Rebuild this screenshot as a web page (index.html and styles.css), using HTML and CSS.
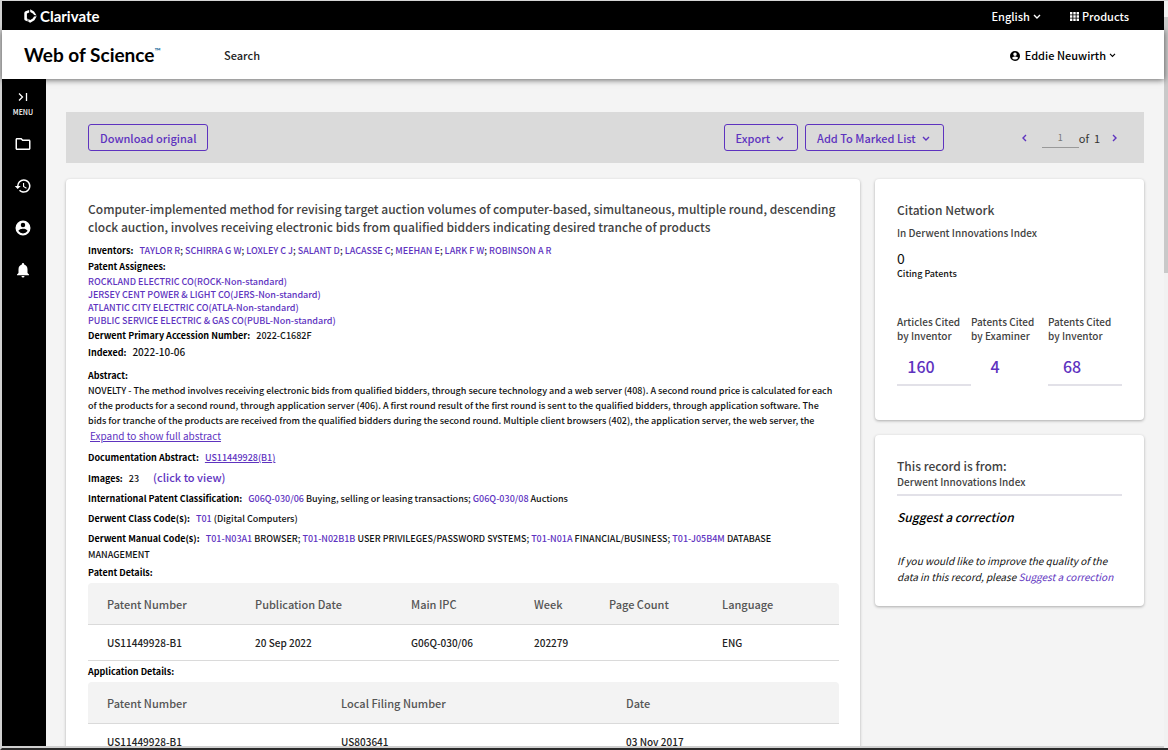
FILE: index.html
```html
<!DOCTYPE html>
<html lang="en">
<head>
    <title>Web of Science</title>
    <meta charset="UTF-8">
    <meta name="viewport" content="width=device-width, initial-scale=1.0">
    <link rel="stylesheet" href="styles.css">
</head>
<body>
    <div class="window">
        <div class="page">
            <header class="topbar">
                <a href="#" class="clarivate">
                    <svg width="13" height="14" viewBox="0 0 13 14" fill="#fff">
                        <path d="M5.2.9 1.5 2.200Q.3 2.700.3 4v6q0 1.200 1 1.600l2.400.8V9.800L2.900 9.400V4.600l2.300-1.200z"/>
                        <path d="M6.200.3 10 2.500l2.600 3.900-2.500-.5-1.200-1.500-2.700-1.500z"/>
                        <path d="m12.700 7.300-2.300 4L6.200 13.700l-1.900-1V10l1.900 1 2.600-1.500 1.200-2z"/>
                    </svg>
                    <span>Clarivate</span>
                </a>
                <div class="topbar-links">
                    <button class="topbar-btn">English
                        <svg class="chevron" width="8" height="6" viewBox="0 0 8 6"><path d="m1 1 3 3 3-3"/></svg>
                    </button>
                    <button class="topbar-btn">
                        <svg width="9" height="9" viewBox="0 0 9 9" fill="#fff"><path d="M0 0h2.4v2.4H0zM3.3 0h2.4v2.4H3.3zM6.6 0H9v2.4H6.600zM0 3.300h2.400v2.400H0zM3.300 3.300h2.400v2.400H3.300zM6.600 3.300H9v2.400H6.600zM0 6.600h2.400V9H0zM3.300 6.600h2.400V9H3.300zM6.600 6.600H9V9H6.600z"/></svg>
                        Products
                    </button>
                </div>
            </header>

            <div class="header">
                <a href="#" class="brand">Web of Science<sup>™</sup></a>
                <a href="#" class="nav-link">Search</a>
                <button class="user-btn">
                    <svg width="10" height="10" viewBox="2 2 20 20"><path d="M12 2a10 10 0 1 0 0 20 10 10 0 0 0 0-20zm0 3a3.500 3.500 0 1 1 0 7 3.500 3.500 0 0 1 0-7zm0 14.200a7.200 7.200 0 0 1-6-3.220c.03-1.990 4-3.080 6-3.080s5.970 1.090 6 3.080a7.200 7.200 0 0 1-6 3.220z"/></svg>
                    <span>Eddie Neuwirth</span>
                    <svg class="chevron" width="7" height="5" viewBox="0 0 8 6"><path d="m1 1 3 3 3-3"/></svg>
                </button>
            </div>

            <div class="body">
                <nav class="sidebar">
                    <button class="menu-btn">
                        <svg width="10" height="10" viewBox="0 0 10 10" fill="none" stroke="#fff" stroke-width="1.300"><path d="m1 1.500 3.500 3.500L1 8.500M8.500 1v8"/></svg>
                        <span>MENU</span>
                    </button>
                    <a href="#" aria-label="Folder">
                        <svg width="18" height="18" viewBox="0 0 24 24"><path d="M9.170 6l2 2H20v10H4V6h5.170M10 4H4c-1.100 0-2 .9-2 2v12c0 1.100.9 2 2 2h16c1.100 0 2-.9 2-2V8c0-1.100-.9-2-2-2h-8l-2-2z"/></svg>
                    </a>
                    <a href="#" aria-label="History">
                        <svg width="18" height="18" viewBox="0 0 24 24"><path d="M13 3a9 9 0 0 0-9 9H1l3.890 3.890.07.14L9 12H6a7 7 0 1 1 7 7 6.950 6.950 0 0 1-4.940-2.060l-1.420 1.420A9 9 0 1 0 13 3zm-1 5v5l4.280 2.540.72-1.210-3.500-2.080V8H12z"/></svg>
                    </a>
                    <a href="#" aria-label="Profile">
                        <svg width="18" height="18" viewBox="0 0 24 24"><path d="M12 2a10 10 0 1 0 0 20 10 10 0 0 0 0-20zm0 3a3 3 0 1 1 0 6 3 3 0 0 1 0-6zm0 14.200a7.200 7.200 0 0 1-6-3.220c.03-1.990 4-3.080 6-3.080s5.970 1.090 6 3.080a7.200 7.200 0 0 1-6 3.220z"/></svg>
                    </a>
                    <a href="#" aria-label="Alerts">
                        <svg width="18" height="18" viewBox="0 0 24 24"><path d="M12 22a2 2 0 0 0 2-2h-4a2 2 0 0 0 2 2zm6-6v-5c0-3.070-1.640-5.640-4.500-6.320V4a1.500 1.500 0 0 0-3 0v.68C7.630 5.360 6 7.920 6 11v5l-2 2v1h16v-1l-2-2z"/></svg>
                    </a>
                </nav>

                <main class="content">
                    <div class="toolbar">
                        <button class="btn">Download original</button>
                        <div class="toolbar-right">
                            <button class="btn">Export
                                <svg class="chevron" width="8" height="6" viewBox="0 0 8 6"><path d="m1 1 3 3 3-3"/></svg>
                            </button>
                            <button class="btn">Add To Marked List
                                <svg class="chevron" width="8" height="6" viewBox="0 0 8 6"><path d="m1 1 3 3 3-3"/></svg>
                            </button>
                            <div class="pager">
                                <button class="pager-btn" aria-label="Previous record">
                                    <svg class="chevron" width="6" height="8" viewBox="0 0 6 8"><path d="M4 1 1 4l3 3"/></svg>
                                </button>
                                <input class="pager-input" type="text" value="1" aria-label="Record number">
                                <span>of&nbsp; 1</span>
                                <button class="pager-btn" aria-label="Next record">
                                    <svg class="chevron" width="6" height="8" viewBox="0 0 6 8"><path d="m1 1 3 3-3 3"/></svg>
                                </button>
                            </div>
                        </div>
                    </div>

                    <div class="columns">
                        <article class="card record">
                            <h1>Computer-implemented method for revising target auction volumes of computer-based, simultaneous, multiple round, descending clock auction, involves receiving electronic bids from qualified bidders indicating desired tranche of products</h1>

                            <div class="row"><b>Inventors:</b> <a href="#">TAYLOR R</a>; <a href="#">SCHIRRA G W</a>; <a href="#">LOXLEY C J</a>; <a href="#">SALANT D</a>; <a href="#">LACASSE C</a>; <a href="#">MEEHAN E</a>; <a href="#">LARK F W</a>; <a href="#">ROBINSON A R</a></div>
                            <div class="row"><b>Patent Assignees:</b></div>
                            <ul class="assignees">
                                <li><a href="#">ROCKLAND ELECTRIC CO(ROCK-Non-standard)</a></li>
                                <li><a href="#">JERSEY CENT POWER &amp; LIGHT CO(JERS-Non-standard)</a></li>
                                <li><a href="#">ATLANTIC CITY ELECTRIC CO(ATLA-Non-standard)</a></li>
                                <li><a href="#">PUBLIC SERVICE ELECTRIC &amp; GAS CO(PUBL-Non-standard)</a></li>
                            </ul>
                            <div class="row"><b>Derwent Primary Accession Number:</b> 2022-C1682F</div>
                            <div class="row"><b>Indexed:</b> <span class="large">2022-10-06</span></div>

                            <section class="abstract">
                                <div class="row"><b>Abstract:</b></div>
                                <p>NOVELTY - The method involves receiving electronic bids from qualified bidders, through secure technology and a web server (408). A second round price is calculated for each of the products for a second round, through application server (406). A first round result of the first round is sent to the qualified bidders, through application software. The bids for tranche of the products are received from the qualified bidders during the second round. Multiple client browsers (402), the application server, the web server, the</p>
                                <button class="expand">Expand to show full abstract</button>
                            </section>

                            <div class="row spaced"><b>Documentation Abstract:</b> <a href="#" class="underlined">US11449928(B1)</a></div>
                            <div class="row spaced"><b>Images:</b> 23 <a href="#" class="view-link">(click to view)</a></div>
                            <div class="row spaced"><b>International Patent Classification:</b> <a href="#">G06Q-030/06</a> Buying, selling or leasing transactions; <a href="#">G06Q-030/08</a> Auctions</div>
                            <div class="row spaced"><b>Derwent Class Code(s):</b> <a href="#">T01</a> (Digital Computers)</div>
                            <div class="row codes"><b>Derwent Manual Code(s):</b> <a href="#">T01-N03A1</a> BROWSER; <a href="#">T01-N02B1B</a> USER PRIVILEGES/PASSWORD SYSTEMS; <a href="#">T01-N01A</a> FINANCIAL/BUSINESS; <a href="#">T01-J05B4M</a> DATABASE MANAGEMENT</div>

                            <table class="details patent">
                                <caption>Patent Details:</caption>
                                <thead>
                                    <tr><th>Patent Number</th><th>Publication Date</th><th>Main IPC</th><th>Week</th><th>Page Count</th><th>Language</th></tr>
                                </thead>
                                <tbody>
                                    <tr><td>US11449928-B1</td><td>20 Sep 2022</td><td>G06Q-030/06</td><td>202279</td><td></td><td>ENG</td></tr>
                                </tbody>
                            </table>

                            <table class="details application">
                                <caption>Application Details:</caption>
                                <thead>
                                    <tr><th>Patent Number</th><th>Local Filing Number</th><th>Date</th></tr>
                                </thead>
                                <tbody>
                                    <tr><td>US11449928-B1</td><td>US803641</td><td>03 Nov 2017</td></tr>
                                </tbody>
                            </table>
                        </article>

                        <aside class="side">
                            <section class="card citation">
                                <h2>Citation Network</h2>
                                <h3>In Derwent Innovations Index</h3>
                                <div class="citing-count">0</div>
                                <div class="citing-label">Citing Patents</div>
                                <div class="cited">
                                    <div class="cited-item lined">
                                        <h3>Articles Cited by Inventor</h3>
                                        <a href="#">160</a>
                                    </div>
                                    <div class="cited-item">
                                        <h3>Patents Cited by Examiner</h3>
                                        <a href="#">4</a>
                                    </div>
                                    <div class="cited-item lined">
                                        <h3>Patents Cited by Inventor</h3>
                                        <a href="#">68</a>
                                    </div>
                                </div>
                            </section>

                            <section class="card source">
                                <h2>This record is from:</h2>
                                <h3>Derwent Innovations Index</h3>
                                <h4>Suggest a correction</h4>
                                <p>If you would like to improve the quality of the data in this record, please <a href="#">Suggest a correction</a></p>
                            </section>
                        </aside>
                    </div>
                </main>
            </div>
        </div>
        <div class="scrollbar"><div class="scrollbar-thumb"></div></div>
    </div>
</body>
</html>
```
FILE: styles.css
```css
:root {
    --purple: #5e33bf;
    --heading: #424242;
    --text: #111111;
    --page-bg: #f4f4f4;
    --toolbar-bg: #dadada;
    --line: #dadada;
}

* {
    margin: 0;
    padding: 0;
    box-sizing: border-box;
}

body {
    font-family: "Noto Sans CJK SC", "Noto Sans", sans-serif;
    font-size: 10px;
    line-height: 16px;
    color: var(--text);
    background: var(--page-bg);
    overflow: hidden;
}

a {
    color: var(--purple);
    text-decoration: none;
}

button {
    font: inherit;
    border: none;
    background: none;
    cursor: pointer;
}

svg {
    flex: none;
}

.chevron {
    fill: none;
    stroke: currentColor;
    stroke-width: 1.4;
}

.window {
    display: flex;
    height: 100vh;
    border-top: 1px solid #d5d5d5;
    border-left: 2px solid #d0d0d0;
    border-bottom: 2px solid #2a2a2a;
}

.page {
    flex: 1;
    min-width: 0;
    display: flex;
    flex-direction: column;
    border-bottom: 2px solid #cfcfcf;
}

.scrollbar {
    width: 4px;
    padding-top: 16px;
    background: #f1f1f1;
}

.scrollbar-thumb {
    height: 35%;
    background: #c9c9c9;
}

/* Top bar */
.topbar {
    display: flex;
    align-items: center;
    justify-content: space-between;
    height: 29px;
    padding: 0 35px 0 22px;
    background: #000;
    color: #fff;
}

.clarivate {
    display: flex;
    align-items: center;
    gap: 3px;
    font-family: Lato, sans-serif;
    font-size: 15px;
    font-weight: bold;
    color: #fff;
}

.topbar-links {
    display: flex;
    gap: 29px;
}

.topbar-btn {
    display: flex;
    align-items: center;
    gap: 3px;
    font-size: 11px;
    font-weight: 500;
    color: #fff;
}

.topbar-btn svg,
.user-btn svg,
.btn svg {
    margin-top: 2px;
}

/* Header */
.header {
    position: relative;
    display: flex;
    align-items: center;
    height: 49px;
    padding: 0 48px 0 22px;
    background: #fff;
    box-shadow: 0 1px 6px rgba(0, 0, 0, 0.6);
}

.brand {
    width: 200px;
    font-family: Lato, sans-serif;
    font-size: 19px;
    font-weight: bold;
    color: #000;
}

.brand sup {
    font-size: 8px;
    vertical-align: 8px;
    line-height: 0;
    color: #1c6c9c;
}

.nav-link {
    font-size: 11px;
    font-weight: 500;
    color: #222;
}

.user-btn {
    display: flex;
    align-items: center;
    gap: 3px;
    margin-left: auto;
    font-size: 11px;
    font-weight: 500;
}

.user-btn span {
    margin-left: 2px;
}

.body {
    flex: 1;
    min-height: 0;
    display: flex;
}

/* Sidebar */
.sidebar {
    display: flex;
    flex-direction: column;
    align-items: center;
    gap: 24px;
    width: 44px;
    padding-top: 13px;
    background: #000;
}

.sidebar a {
    height: 18px;
    padding-right: 2px;
}

.sidebar a svg {
    fill: #fff;
}

.menu-btn {
    display: flex;
    flex-direction: column;
    align-items: center;
    gap: 2px;
    margin-bottom: -9px;
    padding-right: 2px;
    font-size: 7px;
    font-weight: 500;
    color: #fff;
}

.content {
    flex: 1;
    min-width: 0;
    padding: 33px 20px 0;
    overflow: hidden;
}

/* Toolbar */
.toolbar {
    display: flex;
    align-items: center;
    justify-content: space-between;
    height: 51px;
    padding: 0 26px 0 22px;
    background: var(--toolbar-bg);
}

.toolbar-right {
    display: flex;
    gap: 7px;
}

.btn {
    display: flex;
    align-items: center;
    gap: 6px;
    height: 27px;
    padding: 0 11px;
    border: 1px solid var(--purple);
    border-radius: 3px;
    font-size: 11px;
    font-weight: 500;
    color: var(--purple);
}

.toolbar-right .btn {
    padding-right: 13px;
}

.pager {
    display: flex;
    align-items: center;
    margin-left: 71px;
    font-size: 11px;
    color: #333;
}

.pager-btn {
    display: flex;
    color: var(--purple);
}

.pager-btn:first-child {
    margin-right: 14px;
}

.pager-btn:last-child {
    margin-left: 12px;
}

.pager-input {
    width: 37px;
    height: 20px;
    border: none;
    border-bottom: 1px solid #999;
    background: none;
    font: inherit;
    font-size: 9px;
    text-align: center;
    color: #777;
}

/* Cards */
.columns {
    display: grid;
    grid-template-columns: 1fr 269px;
    gap: 15px;
    align-items: start;
    margin-top: 16px;
}

.card {
    border-radius: 4px;
    background: #fff;
    box-shadow: 0 1px 3px rgba(0, 0, 0, 0.3);
}

.record {
    padding: 21px 21px 22px 22px;
    font-size: 9px;
    font-weight: 500;
}

h1 {
    margin-bottom: 7px;
    font-size: 12px;
    font-weight: 500;
    line-height: 18px;
    color: var(--heading);
}

.row b {
    margin-right: 4px;
    font-weight: bold;
    color: #000;
}

.row .large {
    font-size: 10px;
}

.assignees {
    margin-bottom: 1px;
    list-style: none;
    line-height: 13px;
}

.abstract {
    margin-top: 7px;
}

.abstract .row {
    line-height: 15px;
}

.abstract p {
    padding-right: 4px;
    line-height: 15px;
}

.expand {
    display: block;
    margin: 0 0 7px 2px;
    font-size: 10px;
    font-weight: normal;
    line-height: 15px;
    text-decoration: underline;
    color: var(--purple);
}

.spaced {
    margin-bottom: 4px;
}

.codes {
    margin-bottom: 2px;
    padding-right: 40px;
}

.underlined {
    text-decoration: underline;
}

.view-link {
    margin-left: 12px;
    font-size: 11px;
    line-height: 15px;
}

/* Tables */
.details {
    width: 100%;
    border-spacing: 0;
    table-layout: fixed;
    text-align: left;
}

.details caption {
    padding-bottom: 2px;
    font-weight: bold;
    text-align: left;
    color: #000;
}

.details th {
    height: 42px;
    padding-left: 19px;
    border-bottom: 1px solid var(--line);
    background: #f3f3f3;
    font-size: 11px;
    font-weight: 500;
    color: #555;
}

.details th:first-child {
    border-top-left-radius: 4px;
}

.details th:last-child {
    border-top-right-radius: 4px;
}

.details td {
    height: 36px;
    padding-left: 19px;
    border-bottom: 1px solid var(--line);
    font-size: 10px;
    color: #222;
}

.patent th:nth-child(1) { width: 148px; }
.patent th:nth-child(2) { width: 156px; }
.patent th:nth-child(3) { width: 123px; }
.patent th:nth-child(4) { width: 75px; }
.patent th:nth-child(5) { width: 113px; }

.application {
    margin-top: 3px;
}

.application th:nth-child(1) { width: 234px; }
.application th:nth-child(2) { width: 285px; }

/* Side column */
.side {
    display: flex;
    flex-direction: column;
    gap: 15px;
}

.side .card {
    padding: 22px 22px 21px;
}

.side h2 {
    font-size: 12px;
    font-weight: 500;
    line-height: 18px;
    color: var(--heading);
}

.side h3 {
    font-size: 10px;
    font-weight: 500;
    line-height: 14px;
    color: var(--heading);
}

.citation h2 {
    margin-bottom: 7px;
}

.citing-count {
    margin-top: 9px;
    font-size: 14px;
    line-height: 18px;
}

.citing-label {
    font-size: 9px;
    font-weight: 500;
    line-height: 14px;
}

.cited {
    display: grid;
    grid-template-columns: 74fr 77fr 74fr;
    margin-top: 34px;
    margin-bottom: 13px;
}

.cited-item {
    padding-bottom: 6px;
}

.cited-item h3 {
    width: 66px;
}

.cited-item a {
    display: block;
    width: 48px;
    margin-top: 11px;
    font-size: 16px;
    font-weight: 500;
    line-height: 24px;
    text-align: center;
}

.lined {
    border-bottom: 2px solid #e2e1e8;
}

.source h3 {
    padding-bottom: 5px;
    border-bottom: 2px solid #e2e1e8;
}

.source h4 {
    margin: 13px 0 28px;
    font-size: 12px;
    font-weight: 500;
    font-style: italic;
    color: #000;
}

.source p {
    font-style: italic;
}
```
